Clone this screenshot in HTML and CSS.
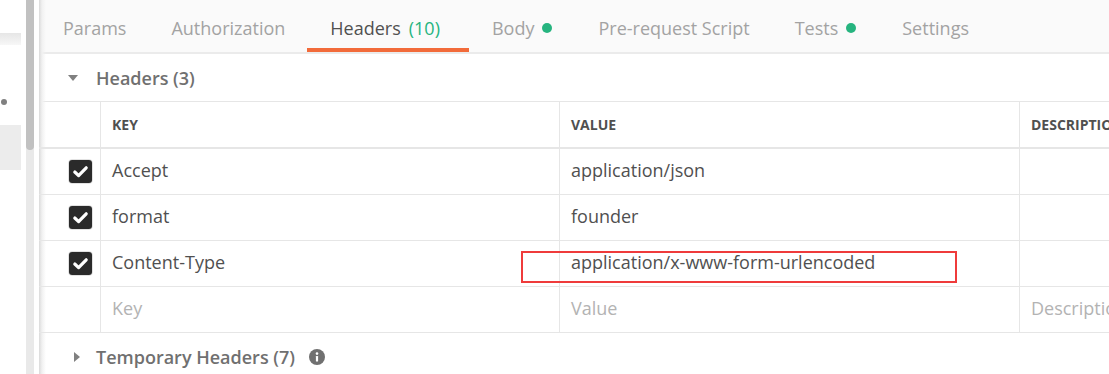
FILE: index.html
```html
<!DOCTYPE html>
<html>
<head>
    <meta charset="UTF-8">
    <title>Headers</title>
    <link rel="stylesheet" href="styles.css">
</head>
<body>
    <div class="app">
        <aside class="sidebar">
            <div class="side-top"></div>
            <div class="side-dot"></div>
            <div class="side-item"></div>
        </aside>
        <div class="scroll"><div class="scroll-thumb"></div></div>

        <main class="panel">
            <nav class="tabs">
                <div class="tab">Params</div>
                <div class="tab">Authorization</div>
                <div class="tab active">Headers <span class="count">(10)</span></div>
                <div class="tab has-dot">Body <span class="dot"></span></div>
                <div class="tab">Pre-request Script</div>
                <div class="tab has-dot">Tests <span class="dot"></span></div>
                <div class="tab">Settings</div>
            </nav>

            <div class="section-title">
                <span class="caret-down"></span>
                <span class="title">Headers (3)</span>
            </div>

            <div class="table">
                <div class="row head">
                    <div class="cell check"></div>
                    <div class="cell">KEY</div>
                    <div class="cell">VALUE</div>
                    <div class="cell">DESCRIPTION</div>
                </div>
                <div class="row">
                    <div class="cell check"><span class="checkbox"><svg width="23" height="23" viewBox="0 0 23 23"><rect width="23" height="23" rx="3" fill="#2a2a2a"/><path d="M5.8 12 L9.6 15.6 L17.2 7.8" fill="none" stroke="#fff" stroke-width="3.2" stroke-linecap="round" stroke-linejoin="round"/></svg></span></div>
                    <div class="cell">Accept</div>
                    <div class="cell">application/json</div>
                    <div class="cell"></div>
                </div>
                <div class="row">
                    <div class="cell check"><span class="checkbox"><svg width="23" height="23" viewBox="0 0 23 23"><rect width="23" height="23" rx="3" fill="#2a2a2a"/><path d="M5.8 12 L9.6 15.6 L17.2 7.8" fill="none" stroke="#fff" stroke-width="3.2" stroke-linecap="round" stroke-linejoin="round"/></svg></span></div>
                    <div class="cell">format</div>
                    <div class="cell">founder</div>
                    <div class="cell"></div>
                </div>
                <div class="row">
                    <div class="cell check"><span class="checkbox"><svg width="23" height="23" viewBox="0 0 23 23"><rect width="23" height="23" rx="3" fill="#2a2a2a"/><path d="M5.8 12 L9.6 15.6 L17.2 7.8" fill="none" stroke="#fff" stroke-width="3.2" stroke-linecap="round" stroke-linejoin="round"/></svg></span></div>
                    <div class="cell">Content-Type</div>
                    <div class="cell">application/x-www-form-urlencoded</div>
                    <div class="cell"></div>
                    <div class="highlight"></div>
                </div>
                <div class="row placeholder">
                    <div class="cell check"></div>
                    <div class="cell">Key</div>
                    <div class="cell">Value</div>
                    <div class="cell">Description</div>
                </div>
            </div>

            <div class="section-title temp">
                <span class="caret-right"></span>
                <span class="title">Temporary Headers (7)</span>
                <span class="info"><svg width="16" height="16" viewBox="0 0 16 16"><circle cx="8" cy="8" r="8" fill="#707070"/><circle cx="8" cy="4.6" r="1.3" fill="#fff"/><rect x="6.9" y="7" width="2.2" height="5.6" rx="0.6" fill="#fff"/></svg></span>
            </div>
        </main>
    </div>
</body>
</html>
```

FILE: styles.css
```css
body {
    margin: 0;
    font-family: 'Open Sans', 'Liberation Sans', sans-serif;
    background-color: #ffffff;
}
.app {
    display: flex;
    height: 374px;
    overflow: hidden;
}

/* left sidebar strip */
.sidebar {
    width: 21px;
    flex-shrink: 0;
}
.side-top {
    margin-top: 33px;
    height: 12px;
    background: linear-gradient(#e6e6e6, #f7f7f7);
}
.side-dot {
    margin: 54px 0 0 1px;
    width: 6px;
    height: 6px;
    border-radius: 50%;
    background-color: #808080;
}
.side-item {
    margin-top: 20px;
    height: 45px;
    background-color: #ececec;
}
.scroll {
    width: 8px;
    flex-shrink: 0;
    margin-left: 5px;
    background-color: #e9e9e9;
}
.scroll-thumb {
    height: 150px;
    background-color: #c1c1c1;
    border-radius: 0 0 4px 4px;
}

/* main panel */
.panel {
    flex: 1;
    min-width: 0;
    margin-left: 5px;
    position: relative;
}
.panel::before {
    content: '';
    position: absolute;
    left: 0;
    top: 0;
    bottom: 0;
    width: 7px;
    background: linear-gradient(to right, #dadada, #f1f1f1 3px, rgba(255, 255, 255, 0));
}
.tabs {
    display: flex;
    height: 52px;
    padding-left: 1px;
    background-color: #fafafa;
    border-bottom: 2px solid #ebebeb;
}
.tab {
    display: flex;
    align-items: center;
    gap: 8px;
    padding: 8px 22px 0 23px;
    font-size: 18px;
    color: #a3a3a3;
    white-space: nowrap;
    box-sizing: border-box;
    border-bottom: 4px solid transparent;
}
.tab.has-dot {
    padding-right: 23px;
}
.tab.active {
    color: #505050;
    border-bottom-color: #f26b3a;
    padding-right: 29px;
}
.count {
    color: #26b47f;
}
.dot {
    width: 10px;
    height: 10px;
    border-radius: 50%;
    background-color: #26b47f;
}

.section-title {
    display: flex;
    align-items: center;
    height: 47px;
    padding-left: 29px;
    font-size: 18px;
    color: #707070;
}
.title {
    font-weight: 600;
}
.caret-down {
    width: 0;
    height: 0;
    border-left: 5px solid transparent;
    border-right: 5px solid transparent;
    border-top: 6px solid #808080;
    margin-right: 18px;
}
.caret-right {
    width: 0;
    height: 0;
    border-top: 5px solid transparent;
    border-bottom: 5px solid transparent;
    border-left: 6px solid #808080;
    margin: 0 16px 0 6px;
}
.section-title.temp {
    height: 48px;
}
.info {
    display: flex;
    margin-left: 14px;
}

/* table */
.table {
    border-top: 1px solid #e6e6e6;
}
.row {
    display: grid;
    grid-template-columns: 61px 459px 460px 1fr;
    height: 46px;
    border-bottom: 1px solid #e6e6e6;
    box-sizing: border-box;
    position: relative;
}
.row.head {
    height: 47px;
    border-bottom: 2px solid #e6e6e6;
}
.cell {
    display: flex;
    align-items: center;
    padding: 0 0 3px 11px;
    border-left: 1px solid #e6e6e6;
    font-size: 18px;
    color: #505050;
    white-space: nowrap;
    overflow: hidden;
}
.cell.check {
    border-left: none;
    padding: 0 0 0 29px;
}
.head .cell {
    padding-bottom: 0;
    font-size: 14px;
    font-weight: 700;
    color: #505050;
}
.placeholder .cell {
    color: #b3b3b3;
}
.checkbox {
    display: flex;
    border: 1px solid #e2e2e2;
    border-radius: 4px;
}
.highlight {
    position: absolute;
    left: 482px;
    top: 10px;
    width: 432px;
    height: 28px;
    border: 2px solid #ef3b3b;
}
```
